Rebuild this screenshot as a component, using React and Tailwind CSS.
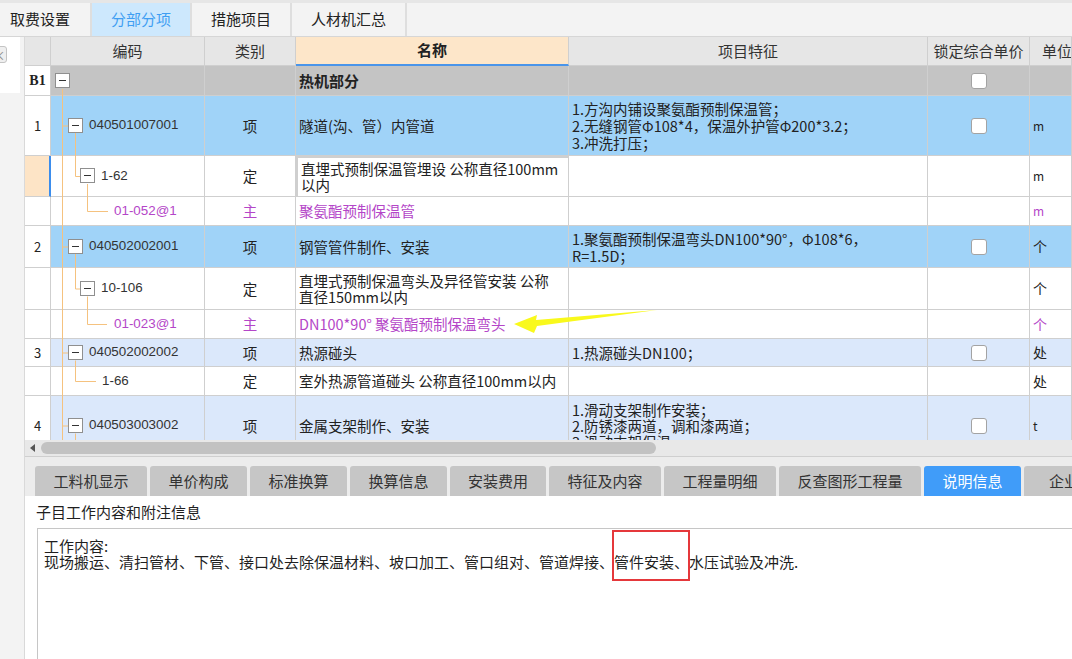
import React from "react";

const CJK = "font-['Noto_Sans_CJK_SC','Noto_Sans',sans-serif]";
const LAT = "font-['Liberation_Sans','Noto_Sans_CJK_SC',sans-serif]";
const COLS = "grid grid-cols-[26px_154px_91px_273px_359px_102px_1fr]";
const cell = "border-r border-b border-[#cfcfcf] flex items-center min-w-0 overflow-hidden whitespace-nowrap";

function Minus() {
    return (
        <span className="w-[15px] h-[15px] shrink-0 bg-white border border-[#8f8f8f] flex items-center justify-center">
            <span className="w-[7px] h-px bg-[#333]" />
        </span>
    );
}

function Check() {
    return <span className="block w-4 h-4 bg-white border border-[#a3a3a3] rounded-[3px]" />;
}

function Code({ pad, box, text, purple }) {
    return (
        <div className={`flex items-center ${pad} ${LAT} text-[13.4px] ${purple ? "text-[#b446c8]" : "text-[#333]"}`}>
            {box && <Minus />}
            <span className={box ? "ml-[6px]" : ""}>{text}</span>
        </div>
    );
}

function Row({ h, bg, num, numCls = "bg-white", code, type, name, nameCls = "", feat, lock, unit, purple }) {
    const txt = purple ? "text-[#b446c8]" : "text-[#222]";
    return (
        <div className={`${COLS} ${h} shrink-0 ${txt}`}>
            <div className={`${cell} justify-center ${numCls} text-[13px] text-[#222]`}>{num}</div>
            <div className={`${cell} ${bg}`}>{code}</div>
            <div className={`${cell} ${bg} justify-center text-[14.5px]`}>{type}</div>
            <div className={`${cell} ${bg} pl-[3px] text-[14.5px] leading-[16px] ${nameCls}`}>{name}</div>
            <div className={`${cell} ${bg} pl-[3px] text-[14.5px] leading-[17px]`}>{feat}</div>
            <div className={`${cell} ${bg} justify-center`}>{lock && <Check />}</div>
            <div className={`${cell} ${bg} pl-[3px] text-[14px]`}>{unit}</div>
        </div>
    );
}

function TreeLines() {
    const c = "#f5c27f";
    const lines = [
        [37.5, 23, 37.5, 374],
        [37.5, 60, 43, 60],
        [50.5, 67, 50.5, 110.5],
        [50.5, 110.5, 55, 110.5],
        [62.5, 118, 62.5, 145.5],
        [62.5, 145.5, 83, 145.5],
        [37.5, 181, 43, 181],
        [50.5, 188, 50.5, 223],
        [50.5, 223, 55, 223],
        [62.5, 230.5, 62.5, 258.5],
        [62.5, 258.5, 82, 258.5],
        [37.5, 287, 43, 287],
        [50.5, 294.5, 50.5, 315.5],
        [50.5, 315.5, 71, 315.5],
        [37.5, 360, 43, 360],
        [50.5, 367.5, 50.5, 374],
    ];
    return (
        <svg className="absolute left-0 top-0 pointer-events-none" width="1047" height="374">
            {lines.map(([x1, y1, x2, y2], i) => (
                <line key={i} x1={x1} y1={y1} x2={x2} y2={y2} stroke={c} strokeWidth="1" />
            ))}
            <polygon points="489,258 512,249 511,254 632,244 512,260 509,267" fill="#f9f91c" />
        </svg>
    );
}

export default function App() {
    const blue = "bg-[#a0d3f8]";
    const light = "bg-[#dbe8fb]";
    const white = "bg-white";
    const bottomTabs = [
        ["工料机显示", "w-[112px]"],
        ["单价构成", "w-[97px]"],
        ["标准换算", "w-[97px]"],
        ["换算信息", "w-[97px]"],
        ["安装费用", "w-[96px]"],
        ["特征及内容", "w-[112px]"],
        ["工程量明细", "w-[112px]"],
        ["反查图形工程量", "w-[142px]"],
        ["说明信息", "w-[97px]"],
        ["企业", "w-[80px]"],
    ];

    return (
        <div className={`w-[1072px] h-[659px] overflow-hidden bg-white flex flex-col ${CJK}`}>
            {/* top tabs */}
            <div className="h-[37px] shrink-0 flex bg-[#f3f3f3] border-t-[3px] border-[#e6e6e6] border-b border-b-[#d6d6d6] text-[15px] text-[#222]">
                <div className="w-[92px] h-full flex items-center pl-[10px] border-r-2 border-[#dedede]">取费设置</div>
                <div className="w-[100px] h-full flex items-center justify-center border-r-2 border-[#dedede] bg-[#cde8fd] text-[#3f9ef2]">分部分项</div>
                <div className="w-[100px] h-full flex items-center justify-center border-r-2 border-[#dedede]">措施项目</div>
                <div className="w-[115px] h-full flex items-center justify-center border-r-2 border-[#dedede]">人材机汇总</div>
            </div>

            <div className="flex flex-1 min-h-0">
                {/* left strip */}
                <div className="w-[25px] shrink-0 bg-[#f3f3f3] border-r border-[#d9d9d9] overflow-hidden">
                    <div className="w-[20px] h-[56px] bg-white pt-[9px]">
                        <div className="-ml-[9px] w-[16px] h-[17px] rounded-[3px] border border-[#c4c4c4] bg-[#efefef] flex items-center justify-center text-[13px] leading-none text-[#8a8a8a]">×</div>
                    </div>
                </div>

                <div className="flex-1 min-w-0 flex flex-col">
                    {/* header */}
                    <div className={`${COLS} h-[29px] shrink-0 text-[15px] text-[#333] bg-[#e6e6e6]`}>
                        <div className={cell}></div>
                        <div className={`${cell} justify-center`}>编码</div>
                        <div className={`${cell} justify-center`}>类别</div>
                        <div className="border-r border-[#cfcfcf] border-b-2 border-b-[#4a95ea] bg-[#fde6c9] flex items-center justify-center font-bold text-[#222]">名称</div>
                        <div className={`${cell} justify-center`}>项目特征</div>
                        <div className={`${cell} justify-center`}>锁定综合单价</div>
                        <div className={`${cell} pl-[12px]`}>单位</div>
                    </div>

                    {/* body */}
                    <div className="relative h-[374px] shrink-0 overflow-hidden flex flex-col">
                        <Row
                            h="h-[30px]"
                            bg="bg-[#c4c4c4]"
                            num={<span className="font-['Liberation_Serif',serif] font-bold text-[14px]">B1</span>}
                            code={<div className="pl-[4px] flex items-center"><Minus /></div>}
                            name={<span className="font-bold text-[15px]">热机部分</span>}
                            lock
                        />
                        <Row
                            h="h-[60px]"
                            bg={blue}
                            num="1"
                            code={<Code pad="pl-[17px]" box text="040501007001" />}
                            type="项"
                            name="隧道(沟、管）内管道"
                            feat={<div>1.方沟内铺设聚氨酯预制保温管；<br />2.无缝钢管Φ108*4，保温外护管Φ200*3.2；<br />3.冲洗打压；</div>}
                            lock
                            unit={<span className="text-[12px]">m</span>}
                        />
                        <Row
                            h="h-[41px]"
                            bg={white}
                            num=""
                            numCls="bg-[#fde4c6] border-r-2 border-r-[#3b8ded]"
                            code={<Code pad="pl-[29px]" box text="1-62" />}
                            type="定"
                            nameCls="border-2 border-[#3b8ee8] pl-[2px]"
                            name={<div>直埋式预制保温管埋设 公称直径100mm<br />以内</div>}
                            unit={<span className="text-[12px]">m</span>}
                        />
                        <Row
                            h="h-[29px]"
                            bg={white}
                            purple
                            code={<Code pad="pl-[63px]" purple text="01-052@1" />}
                            type="主"
                            name="聚氨酯预制保温管"
                            unit={<span className="text-[12px]">m</span>}
                        />
                        <Row
                            h="h-[42px]"
                            bg={blue}
                            num="2"
                            code={<Code pad="pl-[17px]" box text="040502002001" />}
                            type="项"
                            name="钢管管件制作、安装"
                            feat={<div>1.聚氨酯预制保温弯头DN100*90°，Φ108*6，<br />R=1.5D；</div>}
                            lock
                            unit="个"
                        />
                        <Row
                            h="h-[42px]"
                            bg={white}
                            code={<Code pad="pl-[29px]" box text="10-106" />}
                            type="定"
                            name={<div>直埋式预制保温弯头及异径管安装 公称<br />直径150mm以内</div>}
                            unit="个"
                        />
                        <Row
                            h="h-[29px]"
                            bg={white}
                            purple
                            code={<Code pad="pl-[63px]" purple text="01-023@1" />}
                            type="主"
                            name="DN100*90° 聚氨酯预制保温弯头"
                            unit="个"
                        />
                        <Row
                            h="h-[28px]"
                            bg={light}
                            num="3"
                            code={<Code pad="pl-[17px]" box text="040502002002" />}
                            type="项"
                            name="热源碰头"
                            feat="1.热源碰头DN100；"
                            lock
                            unit="处"
                        />
                        <Row
                            h="h-[29px]"
                            bg={white}
                            code={<Code pad="pl-[51px]" text="1-66" />}
                            type="定"
                            name="室外热源管道碰头 公称直径100mm以内"
                            unit="处"
                        />
                        <Row
                            h="h-[60px]"
                            bg={light}
                            num="4"
                            code={<Code pad="pl-[17px]" box text="040503003002" />}
                            type="项"
                            name="金属支架制作、安装"
                            feat={<div className="leading-[16px]">1.滑动支架制作安装；<br />2.防锈漆两道，调和漆两道；<br />3.滑动支架保温</div>}
                            lock
                            unit={<span className="text-[12px]">t</span>}
                        />
                        <TreeLines />
                    </div>

                    {/* horizontal scrollbar */}
                    <div className="h-[17px] shrink-0 bg-[#e8e8e8] flex items-center border-b border-[#cfcfcf]">
                        <span className="ml-[5px] w-0 h-0 border-y-[4px] border-y-transparent border-r-[5px] border-r-[#555]" />
                        <span className="ml-[6px] w-[615px] h-[12px] rounded-full bg-[#c2c2c2]" />
                    </div>

                    {/* bottom tabs */}
                    <div className="shrink-0 bg-[#ececec] pt-[9px] pl-[10px] flex gap-[3px]">
                        {bottomTabs.map(([label, w]) => (
                            <div
                                key={label}
                                className={`${w} shrink-0 h-[30px] rounded-t-[3px] flex items-center justify-center text-[15px] ${label === "说明信息" ? "bg-[#409cf9] text-white" : "bg-[#c6c6c6] text-[#333]"}`}
                            >
                                {label}
                            </div>
                        ))}
                    </div>

                    {/* info panel */}
                    <div className="flex-1 min-h-0 bg-white flex flex-col pt-[6px] text-[#1f1f1f]">
                        <div className="pl-[11px] text-[15px] leading-[20px]">子目工作内容和附注信息</div>
                        <div className="flex-1 mt-[6px] ml-[12px] border-t border-l border-[#c6c6c6] pl-[6px] pt-[9px] text-[15px] leading-[16px]">
                            <div>工作内容:</div>
                            <div className="whitespace-nowrap">
                                现场搬运、清扫管材、下管、接口处去除保温材料、坡口加工、管口组对、管道焊接、
                                <span className="relative">
                                    管件安装、
                                    <span className="absolute -left-[2px] -right-[1px] -top-[21px] -bottom-[9px] border-2 border-[#e5383b]" />
                                </span>
                                水压试验及冲洗.
                            </div>
                        </div>
                    </div>
                </div>
            </div>
        </div>
    );
}
